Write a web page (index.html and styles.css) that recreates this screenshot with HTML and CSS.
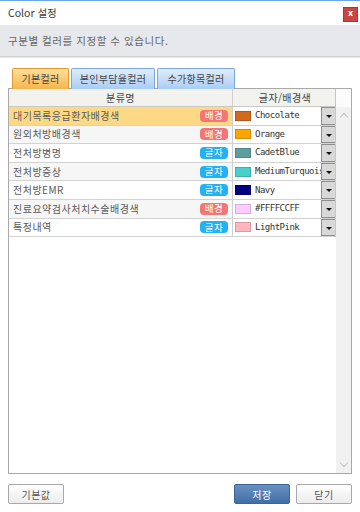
FILE: index.html
```html
<!DOCTYPE html>
<html lang="ko">
<head>
<meta charset="utf-8">
<link rel="stylesheet" href="styles.css">
</head>
<body>
<div class="win">
  <div class="titlebar">
    <span class="title">Color 설정</span>
    <button class="close">x</button>
  </div>
  <div class="desc">구분별 컬러를 지정할 수 있습니다.</div>
  <div class="main">
    <div class="tabs">
      <div class="tab active t1">기본컬러</div>
      <div class="tab t2">본인부담율컬러</div>
      <div class="tab t3">수가항목컬러</div>
    </div>
    <div class="grid">
      <div class="table">
        <div class="row head">
          <div class="c1">분류명</div>
          <div class="c2">글자/배경색</div>
        </div>
        <div class="row sel">
          <div class="c1"><span class="name">대기목록응급환자배경색</span><span class="badge bg">배경</span></div>
          <div class="c2"><span class="sw" style="background:#d2691e"></span><span class="val">Chocolate</span><span class="dd"></span></div>
        </div>
        <div class="row alt">
          <div class="c1"><span class="name">원외처방배경색</span><span class="badge bg">배경</span></div>
          <div class="c2"><span class="sw" style="background:#ffa500"></span><span class="val">Orange</span><span class="dd"></span></div>
        </div>
        <div class="row">
          <div class="c1"><span class="name">전처방병명</span><span class="badge fg">글자</span></div>
          <div class="c2"><span class="sw" style="background:#5f9ea0"></span><span class="val">CadetBlue</span><span class="dd"></span></div>
        </div>
        <div class="row alt">
          <div class="c1"><span class="name">전처방증상</span><span class="badge fg">글자</span></div>
          <div class="c2"><span class="sw" style="background:#48d1cc"></span><span class="val">MediumTurquois</span><span class="dd"></span></div>
        </div>
        <div class="row">
          <div class="c1"><span class="name">전처방EMR</span><span class="badge fg">글자</span></div>
          <div class="c2"><span class="sw" style="background:#000080"></span><span class="val">Navy</span><span class="dd"></span></div>
        </div>
        <div class="row alt">
          <div class="c1"><span class="name">진료요약검사처치수술배경색</span><span class="badge bg">배경</span></div>
          <div class="c2"><span class="sw" style="background:#ffccff"></span><span class="val">#FFFFCCFF</span><span class="dd"></span></div>
        </div>
        <div class="row">
          <div class="c1"><span class="name">특정내역</span><span class="badge fg">글자</span></div>
          <div class="c2"><span class="sw" style="background:#ffb6c1"></span><span class="val">LightPink</span><span class="dd"></span></div>
        </div>
      </div>
      <div class="vscroll">
        <span class="corner"></span>
        <span class="arr up"></span>
        <span class="track"></span>
        <span class="arr down"></span>
      </div>
    </div>
  </div>
  <div class="footer">
    <button class="btn">기본값</button>
    <div class="right">
      <button class="btn primary">저장</button>
      <button class="btn">닫기</button>
    </div>
  </div>
</div>
</body>
</html>
```

FILE: styles.css
```css
* { box-sizing: border-box; }
html, body { margin: 0; padding: 0; }
body {
  width: 360px;
  height: 512px;
  background: #fff;
  font-family: "Noto Sans CJK KR", "Noto Sans", sans-serif;
  color: #555;
  overflow: hidden;
}
.win {
  border-top: 1px solid #6aa6ee;
  height: 512px;
  display: flex;
  flex-direction: column;
}
.titlebar {
  height: 24px;
  display: flex;
  align-items: center;
  justify-content: space-between;
  padding: 0 2px 0 8px;
}
.title {
  font-size: 10.5px;
  color: #3a3a3a;
  line-height: 1;
}
.close {
  width: 15px;
  height: 15px;
  margin-top: 2px;
  padding: 0;
  border: 1px solid #b43434;
  background: #cc4444;
  color: #fff;
  font-family: "DejaVu Sans", sans-serif;
  font-weight: bold;
  font-size: 8px;
  line-height: 12px;
  text-align: center;
}
.desc {
  height: 32px;
  background: #e6e8ec;
  border-bottom: 1px solid #cfcfcf;
  box-shadow: 0 1px 1px rgba(0,0,0,0.08);
  padding: 0 8px;
  display: flex;
  align-items: center;
  font-size: 10.5px;
  color: #666;
  letter-spacing: 0.55px;
}
.main {
  padding: 11px 8px 0 8px;
}
.tabs {
  display: flex;
  gap: 2px;
  padding-left: 4px;
  height: 20px;
  position: relative;
  z-index: 1;
}
.tab {
  height: 21px;
  border: 1px solid #7aa8dc;
  border-bottom: none;
  border-radius: 2px 2px 0 0;
  background: linear-gradient(#e0edfc, #a9cdf5);
  font-size: 10px;
  color: #444;
  display: flex;
  align-items: center;
  justify-content: center;
  line-height: 1;
  letter-spacing: 0.3px;
}
.tab.active {
  border-color: #df9a33;
  background: linear-gradient(#ffdf9a, #f5b64c);
}
.t1 { width: 57px; }
.t2 { width: 84px; }
.t3 { width: 78px; }
.grid {
  height: 386px;
  border: 1px solid #a9a9a9;
  display: flex;
  background: #fff;
}
.table {
  flex: 1;
  display: flex;
  flex-direction: column;
}
.row {
  display: flex;
  height: 18.6px;
  border-bottom: 1px solid #d2d2d2;
  font-size: 10px;
  line-height: 1;
}
.row.head {
  height: 18px;
  background: #f2f2ee;
  border-bottom: 1px solid #c9c9c9;
  color: #444;
}
.row.head .c1, .row.head .c2 {
  justify-content: center;
  letter-spacing: 0.4px;
}
.row.sel { background: #fed985; }
.row.alt { background: #f6f6f6; }
.c1 {
  width: 224px;
  border-right: 1px solid #cfcfcf;
  display: flex;
  align-items: center;
  justify-content: space-between;
  padding: 0 4px 0 4px;
}
.c2 {
  width: 103px;
  border-right: 1px solid #c6c6c6;
  display: flex;
  align-items: center;
  padding-left: 2px;
  background: #fff;
  overflow: hidden;
}
.row.head .c2 { background: transparent; }
.name {
  color: #595959;
  letter-spacing: 0.5px;
}
.badge {
  width: 28px;
  height: 12px;
  border-radius: 4px;
  color: #fff;
  font-size: 9.5px;
  display: flex;
  align-items: center;
  justify-content: center;
  letter-spacing: 0.5px;
}
.badge.bg { background: #f37676; }
.badge.fg { background: #25b0f2; }
.sw {
  flex: none;
  width: 16px;
  height: 10px;
  border: 1px solid rgba(0,0,0,0.15);
}
.val {
  flex: 1;
  margin-left: 4px;
  font-family: "DejaVu Sans Mono", monospace;
  font-size: 9px;
  letter-spacing: -0.5px;
  color: #333;
  white-space: nowrap;
  overflow: hidden;
}
.dd {
  flex: none;
  width: 14px;
  align-self: stretch;
  background: #d8d8d8;
  border: 1px solid #8f8f8f;
  border-right: none;
  position: relative;
}
.dd::after {
  content: "";
  position: absolute;
  left: 4px;
  top: 7px;
  width: 0;
  height: 0;
  border-left: 3px solid transparent;
  border-right: 3px solid transparent;
  border-top: 3px solid #111;
}
.vscroll {
  width: 16px;
  display: flex;
  flex-direction: column;
  align-items: center;
  background: #f1f1f1;
}
.corner {
  height: 18px;
  width: 100%;
  background: #fbfbfb;
}
.arr {
  width: 6px;
  height: 6px;
  border-left: 1px solid #c4c4c4;
  border-top: 1px solid #c4c4c4;
  margin-top: 7px;
  transform: rotate(45deg);
}
.arr.down {
  transform: rotate(225deg);
  margin: 0 0 7px 0;
}
.track { flex: 1; }
.footer {
  display: flex;
  justify-content: space-between;
  padding: 10px 8px 0 8px;
}
.right {
  display: flex;
  gap: 6px;
}
.btn {
  width: 56px;
  height: 20px;
  border: 1px solid #a8a8a8;
  border-radius: 2px;
  background: linear-gradient(#ffffff, #ececec);
  font-family: "Noto Sans CJK KR", sans-serif;
  font-size: 10px;
  color: #555;
  padding: 0;
  letter-spacing: 0.5px;
}
.btn.primary {
  border-color: #3b6495;
  background: linear-gradient(#6891c2, #416fa6);
  color: #fff;
}
```
